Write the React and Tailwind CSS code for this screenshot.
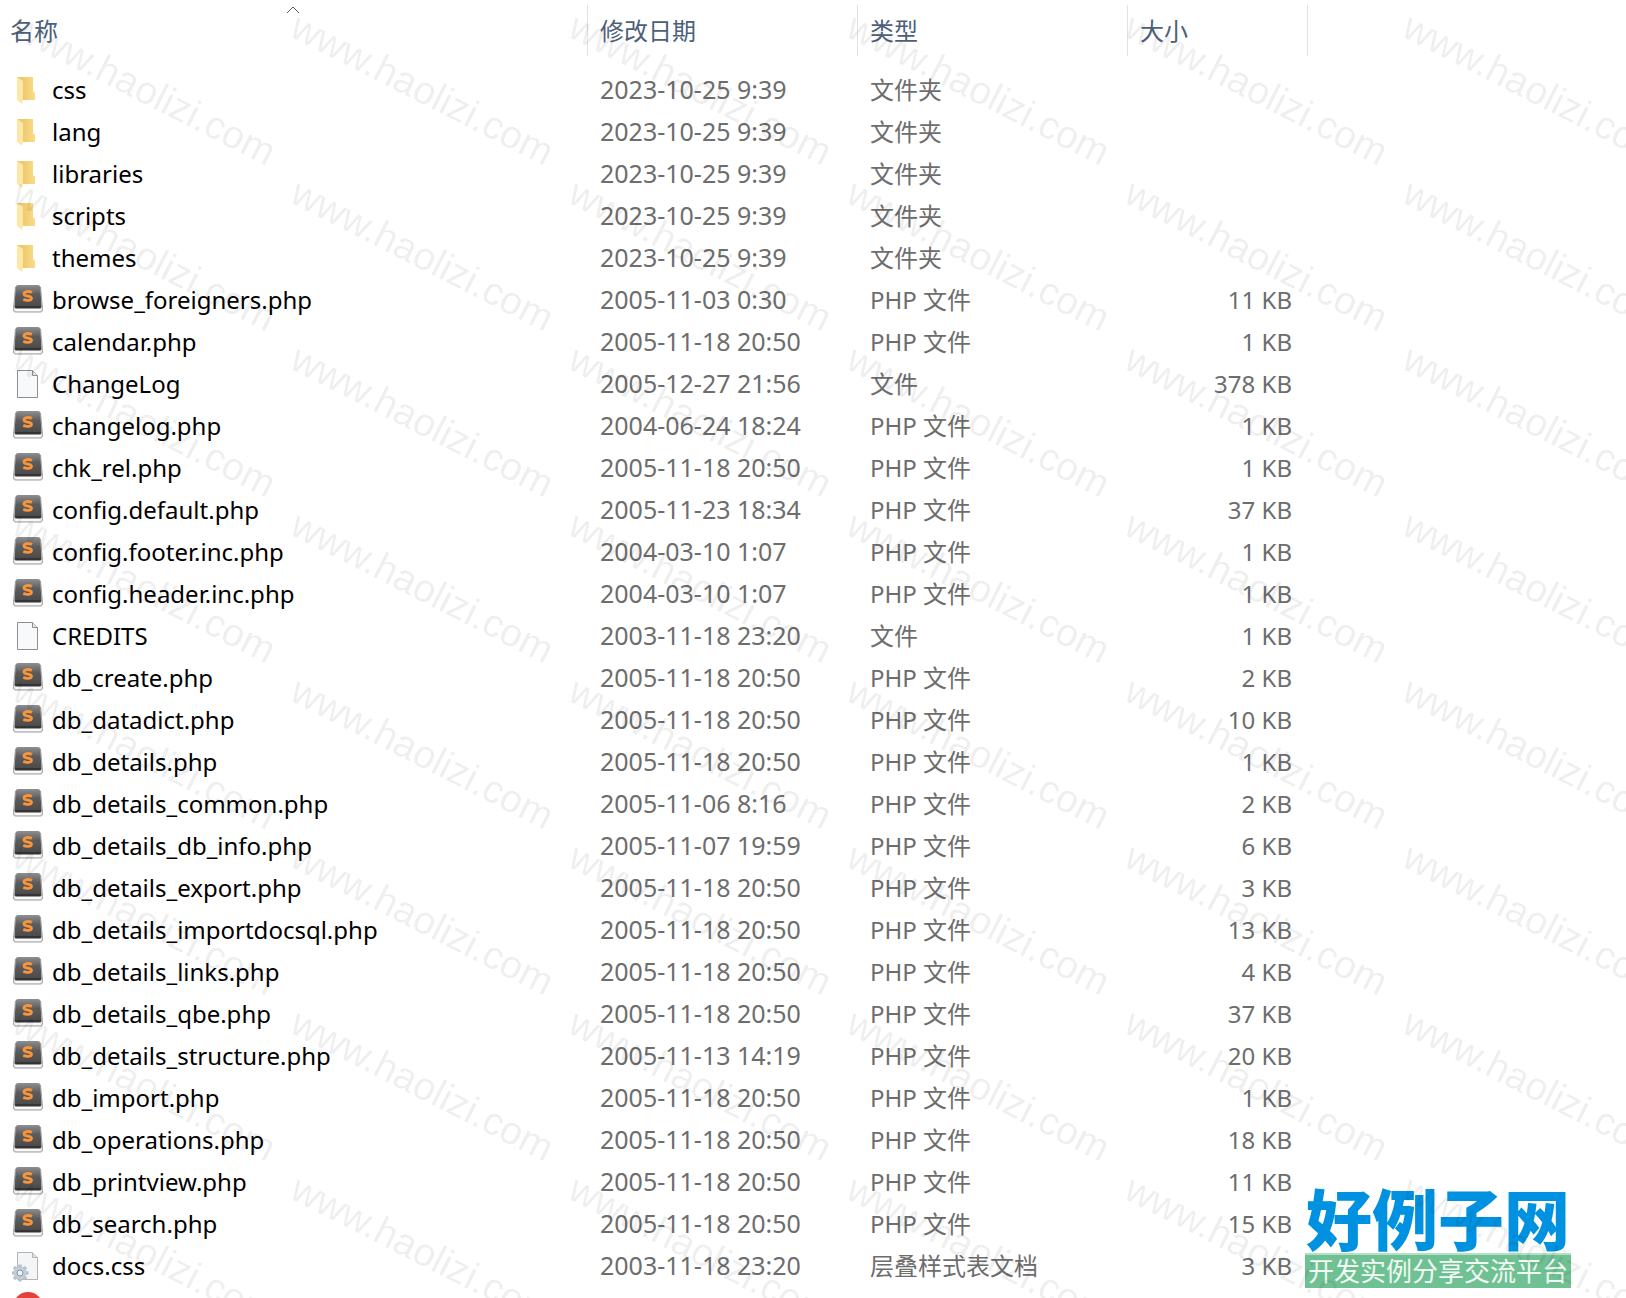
import { clsx } from 'clsx';

const PHP = 'PHP 文件';
const PLAIN = '文件';
const FOLDER = '文件夹';

const FILES = [
  { icon: 'folder', name: 'css', date: '2023-10-25 9:39', type: FOLDER },
  { icon: 'folder', name: 'lang', date: '2023-10-25 9:39', type: FOLDER },
  { icon: 'folder', name: 'libraries', date: '2023-10-25 9:39', type: FOLDER },
  { icon: 'folder', name: 'scripts', date: '2023-10-25 9:39', type: FOLDER },
  { icon: 'folder', name: 'themes', date: '2023-10-25 9:39', type: FOLDER },
  { icon: 'sublime', name: 'browse_foreigners.php', date: '2005-11-03 0:30', type: PHP, size: '11 KB' },
  { icon: 'sublime', name: 'calendar.php', date: '2005-11-18 20:50', type: PHP, size: '1 KB' },
  { icon: 'page', name: 'ChangeLog', date: '2005-12-27 21:56', type: PLAIN, size: '378 KB' },
  { icon: 'sublime', name: 'changelog.php', date: '2004-06-24 18:24', type: PHP, size: '1 KB' },
  { icon: 'sublime', name: 'chk_rel.php', date: '2005-11-18 20:50', type: PHP, size: '1 KB' },
  { icon: 'sublime', name: 'config.default.php', date: '2005-11-23 18:34', type: PHP, size: '37 KB' },
  { icon: 'sublime', name: 'config.footer.inc.php', date: '2004-03-10 1:07', type: PHP, size: '1 KB' },
  { icon: 'sublime', name: 'config.header.inc.php', date: '2004-03-10 1:07', type: PHP, size: '1 KB' },
  { icon: 'page', name: 'CREDITS', date: '2003-11-18 23:20', type: PLAIN, size: '1 KB' },
  { icon: 'sublime', name: 'db_create.php', date: '2005-11-18 20:50', type: PHP, size: '2 KB' },
  { icon: 'sublime', name: 'db_datadict.php', date: '2005-11-18 20:50', type: PHP, size: '10 KB' },
  { icon: 'sublime', name: 'db_details.php', date: '2005-11-18 20:50', type: PHP, size: '1 KB' },
  { icon: 'sublime', name: 'db_details_common.php', date: '2005-11-06 8:16', type: PHP, size: '2 KB' },
  { icon: 'sublime', name: 'db_details_db_info.php', date: '2005-11-07 19:59', type: PHP, size: '6 KB' },
  { icon: 'sublime', name: 'db_details_export.php', date: '2005-11-18 20:50', type: PHP, size: '3 KB' },
  { icon: 'sublime', name: 'db_details_importdocsql.php', date: '2005-11-18 20:50', type: PHP, size: '13 KB' },
  { icon: 'sublime', name: 'db_details_links.php', date: '2005-11-18 20:50', type: PHP, size: '4 KB' },
  { icon: 'sublime', name: 'db_details_qbe.php', date: '2005-11-18 20:50', type: PHP, size: '37 KB' },
  { icon: 'sublime', name: 'db_details_structure.php', date: '2005-11-13 14:19', type: PHP, size: '20 KB' },
  { icon: 'sublime', name: 'db_import.php', date: '2005-11-18 20:50', type: PHP, size: '1 KB' },
  { icon: 'sublime', name: 'db_operations.php', date: '2005-11-18 20:50', type: PHP, size: '18 KB' },
  { icon: 'sublime', name: 'db_printview.php', date: '2005-11-18 20:50', type: PHP, size: '11 KB' },
  { icon: 'sublime', name: 'db_search.php', date: '2005-11-18 20:50', type: PHP, size: '15 KB' },
  { icon: 'css', name: 'docs.css', date: '2003-11-18 23:20', type: '层叠样式表文档', size: '3 KB' },
  { icon: 'chrome', name: '', date: '', type: '' },
];

const COLUMNS = [
  { label: '名称', width: 'w-[588px]', pad: 'pl-[10px]', sorted: true },
  { label: '修改日期', width: 'w-[270px]', pad: 'pl-3' },
  { label: '类型', width: 'w-[270px]', pad: 'pl-3' },
  { label: '大小', width: 'w-[180px]', pad: 'pl-3' },
];

const TEETH = [0, 45, 90, 135, 180, 225, 270, 315];

function FolderIcon() {
  return (
    <>
      <path d="M5 3h16v14l2 2v7H5z" fill="url(#folder-back)" />
      <path d="M5 3l6 4v19l-1 4-5-4z" fill="#ffe8a6" />
    </>
  );
}

function SublimeIcon() {
  return (
    <>
      <path d="M3.500 3h25l2 21.500q.2 3.500-1.500 3.500H3q-1.700 0-1.500-3.500z" fill="#e6e6e6" stroke="#a0a0a0" />
      <path d="M6 1h20q2 0 2.200 2l1.300 19.500q0 2-1.500 2H4q-1.500 0-1.500-2L3.800 3Q4 1 6 1z" fill="url(#key-cap)" />
      <path d="M3.500 23h25" stroke="#2c2c2c" strokeWidth="1.500" />
      <path d="M3.500 26h25" stroke="#ffffff" strokeWidth="1.500" />
      <path
        d="M20 8.300c-3.500-1.400-8-.9-8 1.700 0 2.800 7.500 1.600 7.500 4.200 0 2.500-4.800 2.700-8.200 1.200"
        fill="none"
        stroke="#f9943a"
        strokeWidth="2.800"
      />
    </>
  );
}

function PageIcon() {
  return (
    <>
      <path d="M5.500 2.500h15l5 5v22h-20z" fill="#f8f9fa" stroke="#8e8e8e" />
      <path d="M20.500 2.500v5h5" fill="#e6e6e6" stroke="#8e8e8e" />
    </>
  );
}

function CssIcon() {
  return (
    <>
      <path d="M5.500 2.500h15l5 5v22h-20z" fill="#f4f5f6" stroke="#b4b4b4" />
      <path d="M20.500 2.500v5h5" fill="#e0e0e0" stroke="#b4b4b4" />
      <g transform="translate(8 23)">
        {TEETH.map((a) => (
          <path key={a} d="M-1.500-8.500h3l.8 4h-4.600z" fill="#b4c0ca" transform={`rotate(${a})`} />
        ))}
        <circle r="4.500" fill="none" stroke="#c2cdd6" strokeWidth="3.500" />
        <circle r="3" fill="#eef2f5" stroke="#8598a8" strokeWidth="1" />
      </g>
    </>
  );
}

function ChromeIcon() {
  return (
    <>
      <circle cx="16" cy="15" r="15" fill="#e5403a" />
      <circle cx="16" cy="15" r="6" fill="#4285f4" stroke="#ffffff" strokeWidth="2" />
    </>
  );
}

const ICONS = {
  folder: FolderIcon,
  sublime: SublimeIcon,
  page: PageIcon,
  css: CssIcon,
  chrome: ChromeIcon,
};

function FileIcon({ kind }) {
  const Drawing = ICONS[kind];
  return (
    <svg className="w-8 h-8 shrink-0" viewBox="0 0 32 32" aria-hidden="true">
      <Drawing />
    </svg>
  );
}

function IconGradients() {
  return (
    <svg className="absolute w-0 h-0" aria-hidden="true">
      <defs>
        <linearGradient id="folder-back" x1="0" x2="1" y1="0" y2="0">
          <stop offset="0.3" stopColor="#ecc96f" />
          <stop offset="1" stopColor="#fbdc85" />
        </linearGradient>
        <linearGradient id="key-cap" x1="0" x2="0" y1="0" y2="1">
          <stop offset="0" stopColor="#8f8f8f" />
          <stop offset="0.4" stopColor="#5c5c5c" />
          <stop offset="1" stopColor="#484848" />
        </linearGradient>
      </defs>
    </svg>
  );
}

function Watermark() {
  return (
    <div
      className="absolute inset-0 overflow-hidden pointer-events-none select-none grid grid-cols-[repeat(6,278px)] auto-rows-[166px] pl-[14px] pt-[6px]"
      aria-hidden="true"
    >
      {Array.from({ length: 48 }, (_, i) => (
        <span
          key={i}
          className="font-['Liberation_Sans'] text-[39px] leading-10 whitespace-nowrap text-black/8 origin-top-left rotate-27 translate-x-[11px]"
        >
          www.haolizi.com
        </span>
      ))}
    </div>
  );
}

function SiteLogo() {
  return (
    <div className="absolute right-[55px] bottom-[10px] flex flex-col items-center">
      <span className="text-[66px] leading-[68px] font-black text-[#0092e0]">好例子网</span>
      <span className="bg-[#6fc193] border-t-2 border-[#b5dfc8] text-[26px] leading-[33px] text-white/90 px-[3px]">
        开发实例分享交流平台
      </span>
    </div>
  );
}

export default function App() {
  return (
    <main className="relative h-screen overflow-hidden bg-white font-['Noto_Sans','Noto_Sans_CJK_SC',sans-serif] text-2xl">
      <IconGradients />
      <table className="table-fixed w-[1308px] border-collapse">
        <thead>
          <tr className="h-[69px]">
            {COLUMNS.map((col) => (
              <th
                key={col.label}
                className={clsx('relative p-0 pt-[5px] align-top font-normal', col.width)}
                aria-sort={col.sorted ? 'ascending' : undefined}
              >
                <button
                  type="button"
                  className={clsx('block w-full h-[51px] text-left text-[#4c607a] border-r border-[#e2e2e2]', col.pad)}
                >
                  {col.label}
                </button>
                {col.sorted && (
                  <svg className="absolute top-1 left-1/2 -translate-x-1/2 w-4 h-3" viewBox="0 0 16 12" aria-hidden="true">
                    <path d="M1 9l6-6 6 6" fill="none" stroke="#5a5a5a" />
                  </svg>
                )}
              </th>
            ))}
          </tr>
        </thead>
        <tbody>
          {FILES.map((file) => (
            <tr key={file.name} className="h-[42px] text-[#6d6d6d] whitespace-nowrap">
              <td className="p-0 pl-3">
                <div className="flex items-center gap-2 text-black">
                  <FileIcon kind={file.icon} />
                  {file.name}
                </div>
              </td>
              <td className="p-0 pl-3 text-[25px]">{file.date}</td>
              <td className="p-0 pl-3">{file.type}</td>
              <td className="p-0 pr-4 text-right">{file.size}</td>
            </tr>
          ))}
        </tbody>
      </table>
      <SiteLogo />
      <Watermark />
    </main>
  );
}
